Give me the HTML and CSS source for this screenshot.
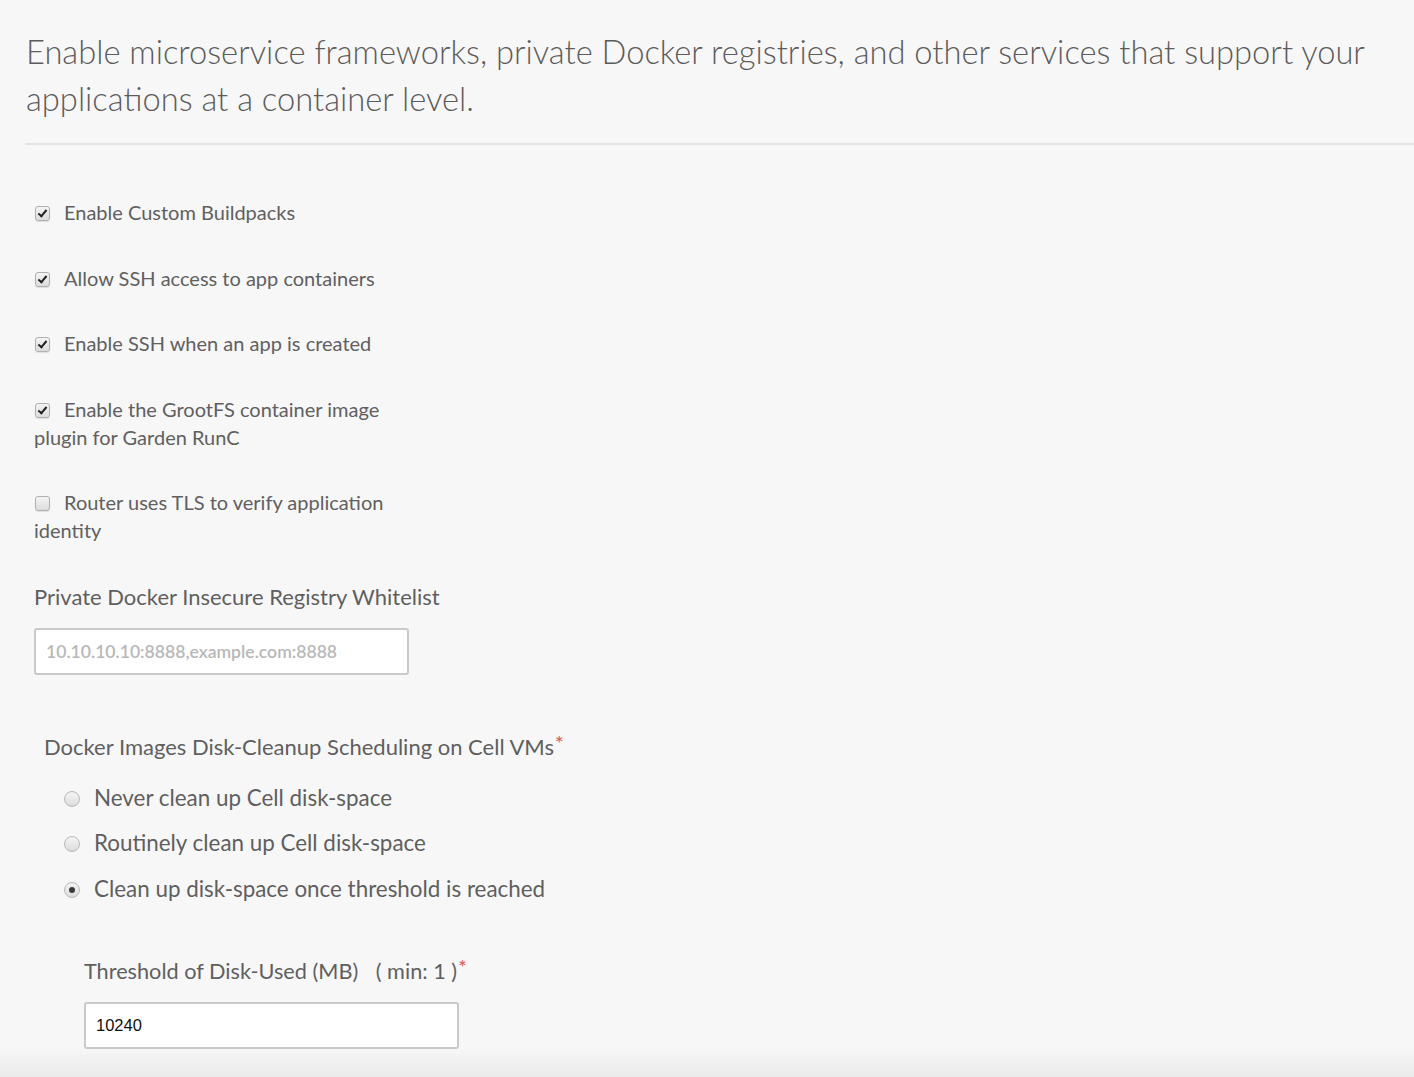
FILE: index.html
```html
<!DOCTYPE html>
<html>
<head>
<meta charset="utf-8">
<link rel="stylesheet" href="styles.css">
</head>
<body>
<div class="page">
  <h1 class="intro">Enable microservice frameworks, private Docker registries, and other services that support your applications at a container level.</h1>
  <div class="form">
    <div class="check-item"><span class="cb checked"></span>Enable Custom Buildpacks</div>
    <div class="check-item"><span class="cb checked"></span>Allow SSH access to app containers</div>
    <div class="check-item"><span class="cb checked"></span>Enable SSH when an app is created</div>
    <div class="check-item"><span class="cb checked"></span>Enable the GrootFS container image plugin for Garden RunC</div>
    <div class="check-item"><span class="cb"></span>Router uses TLS to verify application identity</div>

    <div class="field">
      <div class="field-label">Private Docker Insecure Registry Whitelist</div>
      <div class="text-input placeholder">10.10.10.10:8888,example.com:8888</div>
    </div>

    <div class="radio-group">
      <div class="group-label">Docker Images Disk-Cleanup Scheduling on Cell VMs<span class="req">*</span></div>
      <div class="radio-item first"><span class="rb"></span>Never clean up Cell disk-space</div>
      <div class="radio-item"><span class="rb"></span>Routinely clean up Cell disk-space</div>
      <div class="radio-item"><span class="rb selected"></span>Clean up disk-space once threshold is reached</div>

      <div class="sub-field">
        <div class="sub-label">Threshold of Disk-Used (MB) <span class="min">( min: 1 )</span><span class="req">*</span></div>
        <div class="text-input value">10240</div>
      </div>
    </div>
  </div>
</div>
<div class="bottom-shade"></div>
</body>
</html>
```
FILE: styles.css
```css
html, body {
  margin: 0;
  padding: 0;
  background: #f7f7f7;
  height: 100%;
  overflow: hidden;
}
body {
  font-family: "Source Sans Pro", Lato, "Open Sans", sans-serif;
  color: #5f5f5f;
}
.page {
  padding-left: 25px;
}
.intro {
  margin: 0;
  padding: 28px 30px 21px 1px;
  font-weight: 300;
  font-size: 32.7px;
  line-height: 47px;
  color: #5c5c5c;
  border-bottom: 2px solid #e3e3e3;
}
.form {
  padding: 53px 0 0 9px;
}
.check-item {
  width: 350px;
  font-size: 20px;
  line-height: 28px;
  margin-bottom: 37.5px;
  color: #606060;
}
.cb {
  display: inline-block;
  width: 13px;
  height: 13px;
  border: 1px solid #b0b0b0;
  border-radius: 3px;
  background: linear-gradient(#f4f4f4, #dcdcdc);
  box-shadow: 0 1px 1px rgba(0,0,0,0.1);
  vertical-align: -1px;
  margin: 0 14px 0 1px;
  position: relative;
}
.cb.checked::after {
  content: "";
  position: absolute;
  left: 4px;
  top: 1px;
  width: 3px;
  height: 7px;
  border: solid #222;
  border-width: 0 2.5px 2.5px 0;
  transform: rotate(40deg);
}
.field {
  margin-top: 20px;
}
.field-label {
  font-size: 22px;
  line-height: 30px;
  color: #5f5f5f;
}
.text-input {
  box-sizing: border-box;
  width: 375px;
  height: 47px;
  margin-top: 16px;
  background: #fff;
  border: 2px solid #c9c9c9;
  border-radius: 3px;
  padding: 0 10px;
  font-size: 17.6px;
  line-height: 43px;
}
.placeholder {
  color: #b8b8b8;
  font-weight: 600;
}
.radio-group {
  margin-top: 57px;
  padding-left: 10px;
}
.group-label {
  font-size: 22px;
  line-height: 30px;
  color: #5f5f5f;
}
.req {
  color: #e8605b;
  font-size: 20px;
  font-weight: 600;
  vertical-align: 5px;
  line-height: 0;
  margin-left: 1px;
}
.radio-item {
  padding-left: 20px;
  font-size: 22.4px;
  line-height: 30px;
  margin-top: 15.5px;
  color: #5f5f5f;
}
.radio-item.first {
  margin-top: 21px;
}
.rb {
  display: inline-block;
  box-sizing: border-box;
  width: 16px;
  height: 16px;
  border-radius: 50%;
  border: 1px solid #b9b9b9;
  background: linear-gradient(#f5f5f5, #dcdcdc);
  vertical-align: -1px;
  margin-right: 14px;
  position: relative;
}
.rb.selected::after {
  content: "";
  position: absolute;
  left: 4px;
  top: 4px;
  width: 6px;
  height: 6px;
  border-radius: 50%;
  background: #3a3a3a;
}
.sub-field {
  margin-top: 52px;
  padding-left: 40px;
}
.sub-label {
  font-size: 21.7px;
  line-height: 30px;
  color: #5f5f5f;
}
.min {
  margin-left: 12px;
}
.value {
  color: #111;
  font-family: "Liberation Sans", Arial, sans-serif;
  font-size: 16.5px;
}
.bottom-shade {
  position: fixed;
  left: 0;
  right: 0;
  bottom: 0;
  height: 30px;
  background: linear-gradient(rgba(0,0,0,0), rgba(0,0,0,0.05));
  pointer-events: none;
}
```
